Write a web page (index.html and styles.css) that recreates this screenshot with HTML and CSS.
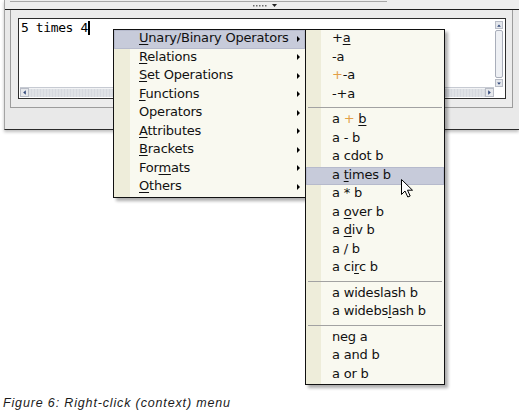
FILE: index.html
```html
<!DOCTYPE html>
<html>
<head>
<meta charset="utf-8">
<link rel="stylesheet" href="styles.css">
</head>
<body>
<div class="window">
  <div class="toolbar">
    <div class="rule"></div>
    <div class="tools">
      <svg width="26" height="5" viewBox="0 0 26 5"><g fill="#6a6a6a"><rect x="0" y="2" width="1.5" height="1.5"/><rect x="3" y="2" width="1.5" height="1.5"/><rect x="6" y="2" width="1.5" height="1.5"/><rect x="9" y="2" width="1.5" height="1.5"/><rect x="12" y="2" width="1.5" height="1.5"/></g><path d="M19 1 H24 L21.5 4 Z" fill="#222"/></svg>
    </div>
  </div>
  <div class="panel">
    <div class="editor">
      <div class="text">5 times 4<span class="caret"></span></div>
      <div class="vscroll">
        <div class="sbtn"><svg width="8" height="7" viewBox="0 0 8 7"><path d="M1.5 5 L4 2 L6.5 5 Z" fill="#33497a"/></svg></div>
        <div class="thumb"></div>
        <div class="sbtn"><svg width="8" height="7" viewBox="0 0 8 7"><path d="M1.5 2 L4 5 L6.5 2 Z" fill="#33497a"/></svg></div>
      </div>
      <div class="hscroll">
        <div class="hbtn"><svg width="8" height="9" viewBox="0 0 8 9"><path d="M5.5 2 L2.5 4.5 L5.5 7 Z" fill="#33497a"/></svg></div>
        <div class="htrack"></div>
        <div class="hbtn"><svg width="8" height="9" viewBox="0 0 8 9"><path d="M2.5 2 L5.5 4.5 L2.5 7 Z" fill="#33497a"/></svg></div>
      </div>
      <div class="corner"></div>
    </div>
  </div>
</div>
<p class="caption">Figure 6: Right-click (context) menu</p>

<div class="menu menu-main">
  <div class="item active"><span><u>U</u>nary/Binary Operators</span><i class="arrow"></i></div>
  <div class="item"><span><u>R</u>elations</span><i class="arrow"></i></div>
  <div class="item"><span><u>S</u>et Operations</span><i class="arrow"></i></div>
  <div class="item"><span><u>F</u>unctions</span><i class="arrow"></i></div>
  <div class="item"><span>Operators</span><i class="arrow"></i></div>
  <div class="item"><span><u>A</u>ttributes</span><i class="arrow"></i></div>
  <div class="item"><span><u>B</u>rackets</span><i class="arrow"></i></div>
  <div class="item"><span>For<u>m</u>ats</span><i class="arrow"></i></div>
  <div class="item"><span><u>O</u>thers</span><i class="arrow"></i></div>
</div>

<div class="menu menu-sub">
  <div class="item"><span>+<u>a</u></span></div>
  <div class="item"><span>-a</span></div>
  <div class="item"><span><span class="or">+</span>-a</span></div>
  <div class="item"><span>-+a</span></div>
  <div class="sep"></div>
  <div class="item"><span>a <span class="or">+</span> <u>b</u></span></div>
  <div class="item"><span>a - b</span></div>
  <div class="item"><span>a cdot b</span></div>
  <div class="item active"><span>a <u>t</u>imes b</span></div>
  <div class="item"><span>a * b</span></div>
  <div class="item"><span>a <u>o</u>ver b</span></div>
  <div class="item"><span>a <u>d</u>iv b</span></div>
  <div class="item"><span>a / b</span></div>
  <div class="item"><span>a ci<u>r</u>c b</span></div>
  <div class="sep"></div>
  <div class="item"><span>a wideslash b</span></div>
  <div class="item"><span>a widebs<u>l</u>ash b</span></div>
  <div class="sep"></div>
  <div class="item"><span>neg a</span></div>
  <div class="item"><span>a and b</span></div>
  <div class="item"><span>a or b</span></div>
</div>

<svg class="pointer" width="13" height="19" viewBox="0 0 13 19"><path d="M0.5 0.5 V15.5 L4 12 L6.8 18 L9.2 17 L6.5 11.2 H11.5 Z" fill="#fff" stroke="#000" stroke-width="1" stroke-linejoin="miter"/></svg>
</body>
</html>
```

FILE: styles.css
```css
html, body {
  margin: 0;
  padding: 0;
}
body {
  width: 519px;
  height: 413px;
  display: flex;
  flex-direction: column;
  background: #ffffff;
  position: relative;
  overflow: hidden;
  font-family: "DejaVu Sans", sans-serif;
}

.window {
  flex: none;
  margin-left: 4px;
  height: 129px;
  border-left: 1px solid #a4a4a4;
  border-bottom: 1px solid #2a2a2a;
  background: #e9e9e9;
  box-shadow: 0 2px 3px rgba(0, 0, 0, 0.25);
}

.toolbar {
  height: 9px;
  background: #ededed;
  border-bottom: 1px solid #1c1c1c;
  box-sizing: border-box;
  height: 10px;
  padding-top: 1px;
}
.rule {
  width: 377px;
  height: 1px;
  margin-left: 5px;
  background: #a6a6a6;
}
.tools {
  display: flex;
  align-items: center;
  height: 7px;
  padding-left: 248px;
}
.tools svg {
  display: block;
}

.panel {
  margin-left: 5px;
  width: 488px;
  padding: 8px 6px 8px 7px;
  border: 1px solid #9c9c9c;
  border-top: 0;
  background: #ececec;
}

.editor {
  box-sizing: border-box;
  width: 488px;
  height: 81px;
  border: 1px solid #2c2c2c;
  background: #ffffff;
  padding: 1px;
  display: grid;
  grid-template-columns: 1fr 10px;
  grid-template-rows: 1fr 10px;
}

.text {
  font-family: "DejaVu Sans Mono", monospace;
  font-size: 13px;
  letter-spacing: -0.4px;
  line-height: 15px;
  padding-left: 1px;
  color: #000;
  white-space: pre;
}
.caret {
  display: inline-block;
  width: 2px;
  height: 14px;
  background: #000;
  vertical-align: -3px;
  margin-left: 0.5px;
}

.vscroll {
  display: flex;
  flex-direction: column;
  padding: 1px 1px 0 1px;
}
.sbtn {
  height: 8px;
  background: #e4e7ec;
  border: 1px solid #b8bcc6;
  box-sizing: border-box;
  display: flex;
  align-items: center;
  justify-content: center;
}
.sbtn svg {
  display: block;
}
.thumb {
  flex: 1;
  margin: 1px 0;
  border: 1px solid #a9aeba;
  border-radius: 2px;
  background: #eef0f4;
}

.hscroll {
  display: flex;
  background: #dcdfe4;
  border-top: 1px solid #c6cad2;
}
.hbtn {
  width: 9px;
  background: #e6e8ec;
  border: 1px solid #b8bcc6;
  box-sizing: border-box;
  display: flex;
  align-items: center;
  justify-content: center;
}
.hbtn svg {
  display: block;
}
.htrack {
  flex: 1;
  background: repeating-linear-gradient(90deg, #dfe2e6 0 2px, #d6d9df 2px 3px);
  border-top: 1px solid #f2f3f5;
}
.corner {
  background: #ffffff;
}

.caption {
  margin: auto 0 0 3px;
  padding-bottom: 3px;
  font-family: "Liberation Sans", Arial, sans-serif;
  font-style: italic;
  font-size: 12.5px;
  letter-spacing: 0.85px;
  line-height: 14px;
  color: #1a1a1a;
}

.menu {
  position: absolute;
  top: 29px;
  border: 1px solid #111111;
  box-shadow: 3px 3px 3px rgba(0, 0, 0, 0.32);
  font-size: 13px;
  letter-spacing: -0.2px;
  color: #111111;
}
.menu-main {
  left: 113px;
  width: 191px;
  z-index: 1;
  background: linear-gradient(to right, #eeedda 16px, #f9f9f0 16px);
}
.menu-sub {
  left: 305px;
  width: 138px;
  z-index: 2;
  background: linear-gradient(to right, #eeedda 15px, #f9f9f0 15px);
}

.item {
  box-sizing: border-box;
  height: 18.5px;
  line-height: 16.5px;
  padding-bottom: 2px;
  display: flex;
  align-items: center;
  justify-content: space-between;
  white-space: pre;
}
.menu-main .item {
  padding-left: 25px;
}
.menu-sub .item {
  padding-left: 26px;
}
.item.active {
  background: #c7cbda;
  box-shadow: inset 0 0 0 1px #b6bacc;
}
.item u {
  text-decoration: underline;
  text-decoration-thickness: 1px;
  text-underline-offset: 2px;
}
.or {
  color: #e2a048;
}
.arrow {
  width: 0;
  height: 0;
  border-left: 3px solid #000;
  border-top: 3px solid transparent;
  border-bottom: 3px solid transparent;
  margin-right: 5px;
  margin-top: 1px;
}

.sep {
  height: 7px;
  display: flex;
  align-items: center;
  padding: 0 2px;
}
.sep::before {
  content: "";
  flex: 1;
  height: 1px;
  background: #a2a2a2;
}

.pointer {
  position: absolute;
  left: 401px;
  top: 179px;
  z-index: 3;
}
```
